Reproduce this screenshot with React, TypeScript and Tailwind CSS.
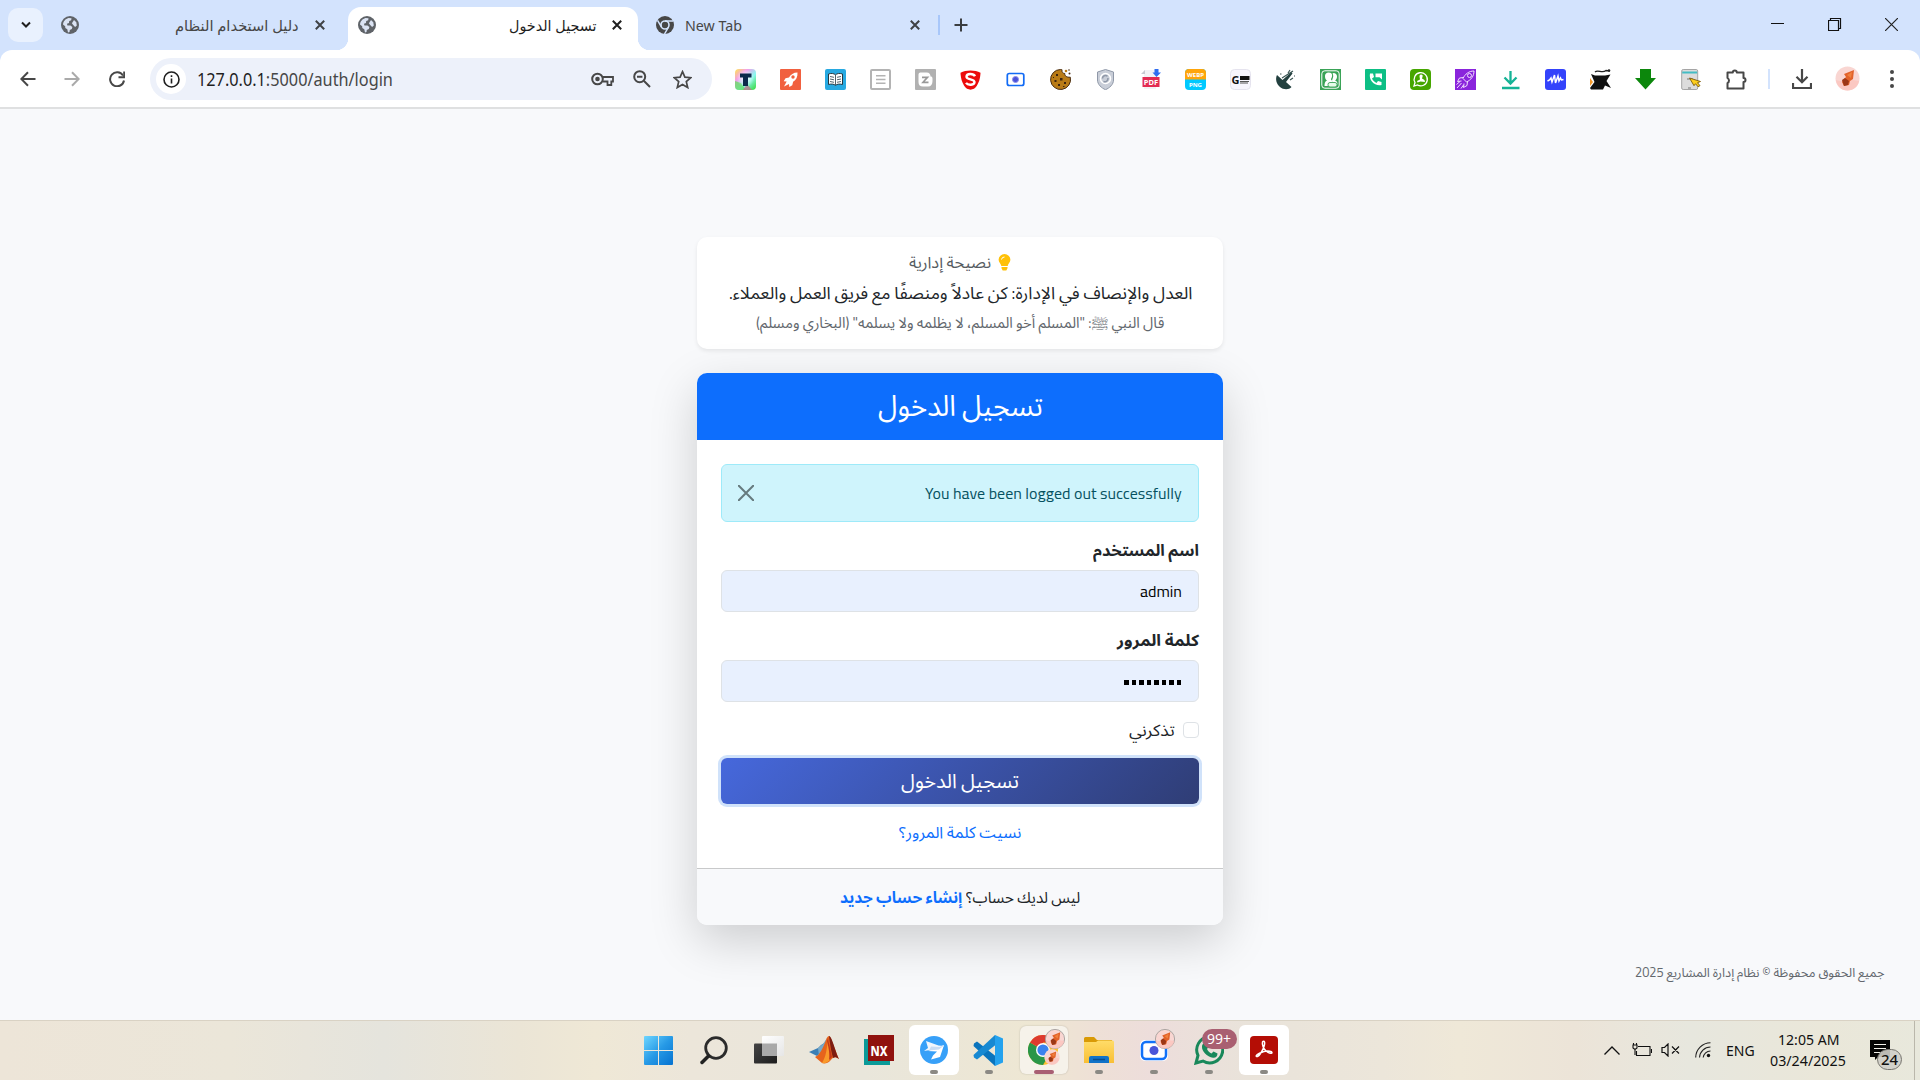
import React, { useLayoutEffect, useRef, useState, type ReactNode } from "react";

const UI = "font-['Noto_Sans','Open_Sans','DejaVu_Sans',sans-serif]";
const AR = "font-['Titillium_Web','Noto_Sans_Arabic','DejaVu_Sans',sans-serif]";

/* Keeps a single line of text at a fixed width, whatever font is available. */
function Fit({ w, className = "", rtl = false, children }: { w: number; className?: string; rtl?: boolean; children: ReactNode }) {
  const ref = useRef<HTMLSpanElement>(null);
  const [scale, setScale] = useState(1);
  useLayoutEffect(() => {
    if (ref.current) setScale(w / ref.current.offsetWidth);
  }, [w]);
  return (
    <span dir="ltr" className="block shrink-0 whitespace-nowrap text-left" style={{ width: w }}>
      <span ref={ref} dir={rtl ? "rtl" : "ltr"} className={`block w-max origin-left ${className}`} style={{ transform: `scaleX(${scale})` }}>
        {children}
      </span>
    </span>
  );
}

const Globe = () => (
  <svg className="size-[18px]" viewBox="0 0 18 18">
    <circle cx="9" cy="9" r="9" fill="#5f6368" />
    <path d="M2 8.600C2.200 5.500 4.500 2.800 7.500 2l3 .2-.3 2-2 .8-.2 2-2 .8.4 1.600h3l2 1.700-.6 2-2 .8-.3 2-1.500.5-.7-3.200-2-1.200-.1-1.700z" fill="#dbe3f3" />
    <path d="M13 4l2.300 2.200.5 3.300-1.700 1.600-1.900-2.100-1.300-1.800z" fill="#dbe3f3" />
  </svg>
);

const Close = ({ c = "#3f4245", w = 2 }: { c?: string; w?: number }) => (
  <svg className="size-[10px]" viewBox="0 0 10 10">
    <path d="M.8.8l8.400 8.400M9.200.8L.8 9.200" stroke={c} strokeWidth={w} />
  </svg>
);

const line = { fill: "none", stroke: "#474747", strokeWidth: 2 } as const;

const Avatar = ({ className = "size-[25px]", ring = false }: { className?: string; ring?: boolean }) => (
  <svg className={className} viewBox="0 0 25 25">
    <circle cx="12.500" cy="12.500" r="12" fill="#f9d6d2" stroke={ring ? "#a9a3a0" : "none"} strokeWidth="1.200" />
    <path d="M1 14c5 2 8 1 11-1l12 2c-1 6-6 9.500-11.500 9.500C6 24.500 2 20 1 14z" fill="#fbc4be" opacity=".8" />
    <path d="M9 8l10-4-1 9-3 2-1 4-5 1-2-4 2-3 2-2z" fill="#e2622a" />
    <path d="M7 14l3-2 4 3-1 4-4 1z" fill="#9c3717" />
    <path d="M12 9l5-3-1 6z" fill="#f0813f" />
  </svg>
);

const extensions: ReactNode[] = [
  <>
    <defs>
      <linearGradient id="rb" x1="0" y1="0" x2="1" y2="1"><stop offset="0" stopColor="#ffe94a" /><stop offset=".3" stopColor="#f49bea" /><stop offset=".6" stopColor="#8bf7f0" /><stop offset="1" stopColor="#35d934" /></linearGradient>
      <radialGradient id="rc"><stop offset="0" stopColor="#fff" /><stop offset="1" stopColor="#fff" stopOpacity="0" /></radialGradient>
    </defs>
    <rect width="21" height="21" rx="4" fill="url(#rb)" />
    <path d="M0 12l6 2 5 7H4a4 4 0 0 1-4-4z" fill="#5fdd55" opacity=".7" />
    <path d="M8 21l4-6 5 6z" fill="#c96a8a" opacity=".7" />
    <circle cx="10.500" cy="9" r="9" fill="url(#rc)" />
    <path d="M5 4.500h11.500v4h-3.500v8.500H8V8.500H5z" fill="#0d2a4a" />
  </>,
  <>
    <rect width="21" height="21" rx="1" fill="#f1603f" />
    <path d="M17.500 3.500c-4 0-7 2-8.500 5l-3.500.8-1.800 3 3 .2-2.700 5 5-2.500.3 3 3-1.800.8-3.500c3-1.700 4.700-4.700 4.400-9.200z" fill="#fff" />
    <circle cx="13" cy="8" r="1.700" fill="#f1603f" />
  </>,
  <>
    <rect width="21" height="21" rx="2" fill="#27a9e1" />
    <path d="M3.500 5c3-1 5.500-.5 7 .8 1.500-1.300 4-1.800 7-.8v10.500c-3-.8-5.500-.5-7 .9-1.500-1.400-4-1.700-7-.9z" fill="#fff" stroke="#273840" />
    <path d="M10.500 6v10M5 7.500l4 .8M5 10l4 .8M5 12.500l4 .8M16 7.500l-4 .8M16 10l-4 .8M16 12.500l-4 .8" stroke="#3d5059" strokeWidth=".9" />
  </>,
  <>
    <rect x="1" y="1" width="19" height="19" rx="1" fill="#fff" stroke="#b3b3b3" strokeWidth="2" />
    <path d="M6 6.800h9.500M6 10.500h9.500M6 14.200h9.500" stroke="#b3b3b3" strokeWidth="1.400" />
  </>,
  <>
    <rect width="21" height="21" rx="1" fill="#b1b1b1" />
    <path d="M5.500 3.500h6c3 0 4 1.800 4 4 2.300 0 2 2 2 4.500 0 3.500-1.500 5.500-4.500 5.500H8c-3 0-4.500-1.500-4.500-4.500V6c0-1.500.5-2.500 2-2.500z" fill="#fff" />
    <path d="M7 8.300h5.500L8 13.300h5.500" fill="none" stroke="#999" strokeWidth="1.700" />
  </>,
  <>
    <path d="M10.500 1.500c4 0 7 .8 10 2.200-.2 6.500-2.500 13-6.500 16l-3.500 1-3.500-1C3 16.700.7 10.200.5 3.700c3-1.400 6-2.200 10-2.200z" fill="#ec0b0b" />
    <path d="M15 7.200C13.500 4.300 6.500 4 6.500 7.700c0 3.300 8 2 8 5.400 0 3.200-6.500 3.600-8.500.8" fill="none" stroke="#fff" strokeWidth="2.400" />
  </>,
  <>
    <rect x="2.300" y="4.500" width="16.500" height="12" rx="2" fill="#fff" stroke="#126bf5" strokeWidth="1.700" />
    <circle cx="10.500" cy="10.500" r="3" fill="#4a51d8" stroke="#8c90ec" />
  </>,
  <>
    <path d="M10.500.5c1 0 1.500.2 1.500.2-.5 2.300.8 3.600 2.800 3.800-.3 2.300 1.700 4 5.500 3.700A10 10 0 1 1 10.500.5z" fill="#b97b16" stroke="#4a2d12" />
    <path d="M6 5h2v2H6zM10 9h2.500v2.500H10zM4.500 11h2v2h-2zM8 15h2v2H8zM14 13h2v2h-2zM3 8h1v1H3zM13 17h1.500v1H13z" fill="#3d240f" />
    <circle cx="16" cy="2" r="1.300" fill="#b97b16" /><circle cx="19.500" cy="4.500" r="1" fill="#4a2d12" /><circle cx="19" cy="1" r=".8" fill="#4a2d12" />
  </>,
  <>
    <path d="M10.500.5l8 2.500v8c0 4.500-4 8-8 9.700-4-1.700-8-5.200-8-9.700V3z" fill="#c9ced8" stroke="#8f98a8" />
    <circle cx="10.500" cy="9.500" r="5" fill="none" stroke="#fff" strokeWidth="1.500" />
    <path d="M7.500 9.500a3 3 0 0 1 5-2.200M8.500 12.500c3 1 4.500-1 4.500-3.500" fill="none" stroke="#8f98a8" strokeWidth="1.500" />
  </>,
  <>
    <path d="M4 1h12v19H4z" fill="#f2f2f5" /><path d="M1 5l4-4v4z" fill="#c7c9d1" />
    <rect x="2.500" y="8" width="17" height="10" fill="#e32b52" />
    <text x="11" y="16" fontSize="7.500" fontWeight="700" textAnchor="middle" fill="#fff" fontFamily="Noto Sans, sans-serif">PDF</text>
    <path d="M14.500 0h4v3.500H21L16.500 8l-4-4.500h2z" fill="#2f6df0" />
  </>,
  <>
    <rect width="21" height="21" rx="4" fill="#00c9ff" /><path d="M0 10.500V4a4 4 0 0 1 4-4h13a4 4 0 0 1 4 4v6.500z" fill="#ffa50a" />
    <text x="10.500" y="8" fontSize="6" fontWeight="700" textAnchor="middle" fill="#fff" fontFamily="Noto Sans, sans-serif">WEBP</text>
    <text x="10.500" y="17.500" fontSize="6" fontWeight="700" textAnchor="middle" fill="#fff" fontFamily="Noto Sans, sans-serif">PNG</text>
  </>,
  <>
    <rect x=".5" y=".5" width="20" height="20" rx="4" fill="#f7f5fd" stroke="#e5e3ee" />
    <text x="1.500" y="15" fontSize="11" fontWeight="700" fill="#111" fontFamily="Noto Sans, sans-serif">G</text>
    <path d="M10 7h9.500v4H10z" fill="#111" /><path d="M10 12.500h9M10 14h8" stroke="#555" />
  </>,
  <>
    <path d="M2 6c-2 4-.5 9 3 12s9 3 11.500 0L11 13l6.500-8.500-1-1.500-9 8z" fill="#23403f" />
    <path d="M7 9l11-7M15 11l3-2M13 4l2-3M19 7h1M5 5h1.500" stroke="#3c5755" strokeWidth="1.200" />
  </>,
  <>
    <rect width="21" height="21" fill="#3aa357" /><rect x="1.800" y="1.800" width="17.400" height="17.400" rx="3" fill="none" stroke="#fff" strokeWidth="1" />
    <path d="M8.500 3.500c3 0 4 1.500 3.500 4-.3 1.500-1 2-1 3l2 2.500v4H4.500c0-3 .5-4.500 2.500-5.500-1.500-1-2-2.500-2-4.500 0-2.200 1.500-3.500 3.500-3.500z" fill="#fff" />
    <path d="M13.500 4c2 0 3.500 1.500 3.500 3.500S16 11 15 11.500c2 .5 2.500 2 2.500 4h-4l-1.500-4 1-3c.5-1.500 0-3-.5-4z" fill="#fff" /><rect x="8" y="13.500" width="9" height="4.500" rx="2" fill="#e6fbe9" stroke="#3aa357" strokeWidth=".9" />
  </>,
  <>
    <rect width="21" height="21" rx="1" fill="#0dbf85" />
    <path d="M5 4.500h3l1 3.500-2 1.500c1 2.200 2.200 3.300 4.500 4.500l1.500-2 3.500 1v3C10 17.500 3.500 11.500 5 4.500z" fill="#fff" />
    <path d="M10.500 4.500H17v6l-2.500-2.200h-4z" fill="#fff" />
  </>,
  <>
    <rect width="21" height="21" rx="4" fill="#46a600" />
    <path d="M4 17l1-3.500a6.600 6.600 0 1 1 2.500 2.500z" fill="none" stroke="#fff" strokeWidth="1.300" />
    <path d="M11 5.500c1.500 0 2 1.200 1.500 2.300l-.5 1.700 2.500 1.500.5 2-4.500-.5-3 1-.5-1.500 3-1.500-.5-3c0-1.200.5-2 1.500-2z" fill="#fff" />
  </>,
  <>
    <rect width="21" height="21" fill="#8a24dc" />
    <path d="M19 2c-5 0-9 3-11 7.500l3.500 3.500C16 11 19 7 19 2zM8.500 8.500l-4 .5-2 3.500 4-.5M12.500 12.500l-.5 4-3.500 2 .5-4M6.500 14L2 19M5 12.500l-3.500 3M8.500 16L6 19.500" fill="none" stroke="#f1dcff" />
    <circle cx="14.500" cy="6.500" r="2" fill="none" stroke="#f1dcff" />
  </>,
  <path d="M10.500 2v11.500M4.500 8.500l6 6 6-6M2 19h17.500" fill="none" stroke="#15b396" strokeWidth="2.300" />,
  <>
    <rect width="21" height="21" rx="3" fill="#3443fb" />
    <path d="M2.500 12l2-1 1.500-2 1 4 2.500-7 1 8 2.500-7 1 5 1.500-3 1 2 2-.5" fill="none" stroke="#fff" strokeWidth="1.500" />
  </>,
  <>
    <path d="M0 9l3 4-3 4z" fill="#f69a2a" />
    <path d="M1 5l4 1.500h10l5.500-1-4 6.500L21 19l-6-2.500L13 20.500H1L0 19l4.500-6z" fill="#111" />
    <path d="M5 3c3-3 7 2 11-1.500l4 .5" fill="none" stroke="#222" strokeWidth="1.300" /><circle cx="19" cy="1.500" r="1.300" fill="#222" />
  </>,
  <path d="M5 0h11v9h5L10.500 20.500 0 9h5z" fill="#0c870c" />,
  <>
    <rect x=".7" y=".5" width="16" height="20" rx="1.500" fill="#dcdcdc" stroke="#a5a5a5" />
    <path d="M1.200 2.500h15v2h-15z" fill="#43bcc4" /><path d="M7 19h3M6 10h6" stroke="#777" />
    <path d="M8.500 9l11 3.500-3 1.200 2.500 3-2 1-2.500-3-1.500 2z" fill="#ffcf1c" stroke="#7c5a0a" strokeWidth=".9" />
  </>,
  <path d="M1.500 3.500h5.300a2 2 0 0 1 4 0h6.700v5.500a2 2 0 0 1 0 4v6.500h-16v-5.300a3 3 0 0 0 0-5.200z" {...line} strokeLinejoin="round" />,
];

function TabStrip() {
  return (
    <div className={`flex h-[50px] shrink-0 bg-[#d3e3fd] ${UI}`}>
      <div className="mt-2 ml-2 flex h-[34px] w-[35px] items-center justify-center rounded-[10px] bg-[#e9f1fe]">
        <svg className="size-[10px]" viewBox="0 0 10 10"><path d="M1 2.500l4 4 4-4" fill="none" stroke="#1f1f1f" strokeWidth="2" /></svg>
      </div>
      <div className="flex w-[305px] items-center pl-[18px]">
        <Globe />
        <span className="ml-24"><Fit w={124} rtl className={`text-[15px] leading-[26px] text-[#474747] ${UI}`}>دليل استخدام النظام</Fit></span>
        <span className="ml-4"><Close /></span>
      </div>
      <div className="relative mt-[7px] flex w-[290px] items-center rounded-t-[13px] bg-white pb-[7px] pl-2.5 before:absolute before:bottom-0 before:-left-3 before:size-3 before:bg-[radial-gradient(circle_at_0_0,transparent_12px,#fff_12.5px)] after:absolute after:-right-3 after:bottom-0 after:size-3 after:bg-[radial-gradient(circle_at_100%_0,transparent_12px,#fff_12.5px)]">
        <Globe />
        <span className="ml-[133px]"><Fit w={88} rtl className="text-[15px] leading-[26px] text-[#1f1f1f]">تسجيل الدخول</Fit></span>
        <span className="ml-[15px]"><Close c="#1f1f1f" /></span>
      </div>
      <div className="flex w-[300px] items-center pl-[18px]">
        <svg className="size-[18px]" viewBox="0 0 18 18">
          <circle cx="9" cy="9" r="9" fill="#474747" />
          <circle cx="9" cy="9" r="4" fill="none" stroke="#d3e3fd" strokeWidth="1.600" />
          <path d="M9 5h8M5.500 11L1.500 4.300M12.500 11l-4 7" stroke="#d3e3fd" strokeWidth="1.500" />
        </svg>
        <span className="ml-[11px]"><Fit w={57} className="text-[15px] leading-[26px] text-[#474747]">New Tab</Fit></span>
        <span className="ml-[168px]"><Close /></span>
      </div>
      <div className="mt-[15px] h-5 w-0.5 bg-[#a8c7fa]" />
      <svg className="mt-[18px] ml-[14px] size-[14px]" viewBox="0 0 14 14"><path d="M7 .5v13M.5 7h13" stroke="#3a3d40" strokeWidth="2" /></svg>
      <div className="ml-auto flex items-start gap-[43px] pt-[18px] pr-[22px]">
        <svg className="h-[13px] w-[14px]" viewBox="0 0 14 13"><path d="M0 5.500h13" stroke="#111" /></svg>
        <svg className="h-[13px] w-[14px]" viewBox="0 0 14 13"><path d="M.5 2.500h10v10H.5zM2.500 2.500v-2h10v10h-2" fill="none" stroke="#111" strokeWidth="1.200" /></svg>
        <svg className="h-[13px] w-[13px]" viewBox="0 0 13 13"><path d="M0 0l13 13M13 0L0 13" stroke="#222" strokeWidth="1.200" /></svg>
      </div>
    </div>
  );
}

function Toolbar() {
  return (
    <div className="h-[59px] shrink-0 bg-[#d3e3fd]">
      <div className="flex h-full items-center rounded-t-xl border-b-2 border-[#dfe0e1] bg-white">
        <svg className="ml-5 size-4" viewBox="0 0 16 16"><path d="M15.500 8H1.500M8 1.200L1.300 8 8 14.800" {...line} /></svg>
        <svg className="ml-7 size-4" viewBox="0 0 16 16"><path d="M.5 8h14M8 1.200L14.700 8 8 14.800" {...line} stroke="#aaaaaa" /></svg>
        <svg className="ml-[29px] size-4" viewBox="0 0 16 16"><path d="M14 4.500A7 7 0 1 0 15 9.500M15.200.5v5.700H9.500" {...line} /></svg>
        <div className="ml-[25px] mt-px flex h-[42px] w-[562px] items-center rounded-full bg-[#edf1fa] pl-1.5">
          <div className="flex size-[30px] items-center justify-center rounded-full bg-white">
            <svg className="size-[17px]" viewBox="0 0 17 17"><circle cx="8.500" cy="8.500" r="7.500" fill="none" stroke="#1f1f1f" strokeWidth="1.600" /><path d="M8.500 7.500v5M8.500 4.300v1.700" stroke="#1f1f1f" strokeWidth="1.600" /></svg>
          </div>
          <span className="ml-[11px]"><Fit w={196} className={`text-[18px] leading-7 text-[#1f1f1f] ${UI}`}>127.0.0.1<span className="text-[#474747]">:5000/auth/login</span></Fit></span>
          <svg className="ml-[198px] h-[14px] w-[23px]" viewBox="0 0 23 14"><circle cx="6.500" cy="7" r="5.300" {...line} /><circle cx="6.500" cy="7" r="2.300" fill="#474747" /><path d="M12 5h10v4.500h-1.700V13H16.500V9.500h-5" {...line} strokeWidth="1.800" /></svg>
          <svg className="ml-[19px] size-[18px]" viewBox="0 0 18 18"><circle cx="6.700" cy="6.700" r="5.500" {...line} /><path d="M4 6.700h5.400M10.800 10.800l6.200 6.200" {...line} /></svg>
          <svg className="ml-[22px] size-[19px]" viewBox="0 0 19 19"><path d="M9.500 1.700l2.400 5.500 5.900.5-4.500 3.900 1.400 5.900-5.200-3.100-5.200 3.100 1.400-5.900L1.200 7.700l5.900-.5z" {...line} strokeWidth="1.700" /></svg>
        </div>
        <div className="ml-[10.5px] mt-0.5 flex">
          {extensions.map((art, i) => (
            <div key={i} className="flex w-[45.05px] justify-center"><svg className="size-[21px]" viewBox="0 0 21 21">{art}</svg></div>
          ))}
        </div>
        <div className="ml-[9px] h-5 w-0.5 bg-[#d3e3fd]" />
        <svg className="ml-[22px] size-5" viewBox="0 0 20 20"><path d="M10 0v13M4.500 7.800L10 13.300l5.500-5.500M1 14v5h18v-5" {...line} strokeWidth="2.200" /></svg>
        <div className="ml-[23px]"><Avatar /></div>
        <svg className="ml-[30px] h-5 w-1" viewBox="0 0 4 20"><circle cx="2" cy="3" r="2" fill="#474747" /><circle cx="2" cy="10" r="2" fill="#474747" /><circle cx="2" cy="17" r="2" fill="#474747" /></svg>
      </div>
    </div>
  );
}

function LoginPage() {
  return (
    <div dir="rtl" className={`flex h-[911px] shrink-0 flex-col items-center bg-[#f8f9fb] pt-[128px] text-[#212529] ${AR}`}>
      <section className="flex h-[112px] w-[526px] flex-col items-center rounded-[10px] bg-white pt-3 shadow-[0_2px_4px_rgba(0,0,0,0.08)]">
        <div className="flex h-[27px] items-center gap-[7px]">
          <svg className="h-[17px] w-[13px]" viewBox="0 0 12 17"><path d="M6 0a5.900 5.900 0 0 0-5.900 5.800c0 2.900 2.500 3.800 2.700 6.200h6.400c.2-2.400 2.700-3.300 2.700-6.200A5.900 5.900 0 0 0 6 0zM3 13h6v1.300L7.800 16.500H4.200L3 14.300z" fill="#ffc107" /><path d="M3 5.500A3 3 0 0 1 6 3" fill="none" stroke="#fff" /></svg>
          <Fit w={82} rtl className="text-[16px] leading-[27px] text-[#565c62]">نصيحة إدارية</Fit>
        </div>
        <div className="mt-[3px] h-7"><Fit w={463} rtl className="text-[17px] leading-7">العدل والإنصاف في الإدارة: كن عادلاً ومنصفًا مع فريق العمل والعملاء.</Fit></div>
        <div className="mt-0.5 h-7"><Fit w={408} rtl className="text-[15px] leading-7 text-[#62676d]">قال النبي ﷺ: "المسلم أخو المسلم، لا يظلمه ولا يسلمه" (البخاري ومسلم)</Fit></div>
      </section>

      <section className="mt-6 flex h-[552px] w-[526px] flex-col overflow-hidden rounded-[10px] bg-white shadow-[0_16px_48px_rgba(0,0,0,0.175)]">
        <h1 className="flex h-[67px] items-center justify-center bg-[#0d6efd] pb-1 text-white"><Fit w={165} rtl className="text-[29px] leading-10">تسجيل الدخول</Fit></h1>
        <div className="flex flex-1 flex-col px-6 pt-6">
          <div className="flex h-[58px] items-center justify-between rounded-md border border-[#9eeaf9] bg-[#cff4fc] px-4 text-[#055160]">
            <Fit w={257} className="font-['Titillium_Web','Open_Sans',sans-serif] text-[16px] leading-6">You have been logged out successfully</Fit>
            <svg className="size-4" viewBox="0 0 16 16"><path d="M.8.8l14.400 14.400M15.200.8L.8 15.200" stroke="#667a7e" strokeWidth="2" strokeLinecap="round" /></svg>
          </div>
          <label className="mt-4 flex h-6"><Fit w={106} rtl className="text-[16px] leading-6 font-bold">اسم المستخدم</Fit></label>
          <div className="mt-2 flex h-[42px] items-center rounded-md border border-[#dee2e6] bg-[#e8f0fe] px-4 text-black">
            <Fit w={42} className="font-['Titillium_Web','Open_Sans',sans-serif] text-[16px] leading-6">admin</Fit>
          </div>
          <label className="mt-4 flex h-6"><Fit w={82} rtl className="text-[16px] leading-6 font-bold">كلمة المرور</Fit></label>
          <div className="mt-2 flex h-[42px] items-center gap-[3.1px] rounded-md border border-[#dee2e6] bg-[#e8f0fe] px-[17px] pt-[3px]">
            {Array.from({ length: 8 }, (_, i) => <span key={i} className="h-[5px] w-[4.4px] bg-black" />)}
          </div>
          <div className="mt-4 flex h-6 items-center gap-2">
            <span className="size-4 rounded border border-[#dee2e6] bg-white" />
            <Fit w={46} rtl className="text-[16px] leading-6">تذكرني</Fit>
          </div>
          <button className="mt-4 flex h-[46px] shrink-0 items-center justify-center rounded-md bg-[linear-gradient(135deg,#4668dc_0%,#2f3d75_100%)] text-white shadow-[0_0_0_3px_#d0e2fa]"><Fit w={118} rtl className="text-[20px] leading-8">تسجيل الدخول</Fit></button>
          <a className="mt-4 flex h-6 justify-center text-[#0d6efd]"><Fit w={122} rtl className="text-[16px] leading-6">نسيت كلمة المرور؟</Fit></a>
        </div>
        <div className="flex h-[57px] items-center justify-center gap-1 border-t border-[#c8c9ca] bg-[#f8f9fb]">
          <Fit w={114} rtl className="text-[16px] leading-6">ليس لديك حساب؟</Fit>
          <Fit w={122} rtl className="text-[16px] leading-6 font-bold text-[#0d6efd]">إنشاء حساب جديد</Fit>
        </div>
      </section>
      <footer className="mt-9 flex w-full pr-[35px]"><Fit w={250} rtl className="text-[12.5px] leading-6 text-[#62676d]">جميع الحقوق محفوظة © نظام إدارة المشاريع 2025</Fit></footer>
    </div>
  );
}

function TaskApp({ box = "size-[50px]", mark = "bottom-px w-2 bg-[#8b8984]", open = true, children }: { box?: string; mark?: string; open?: boolean; children: ReactNode }) {
  return (
    <div className="flex w-[55px] items-center justify-center">
      <div className={`relative flex items-center justify-center rounded-md ${box}`}>
        {children}
        {open && <span className={`absolute h-1 rounded-full ${mark}`} />}
      </div>
    </div>
  );
}

function Taskbar() {
  return (
    <div className={`flex h-[60px] shrink-0 items-center border-t border-[#d9d2c4] bg-[linear-gradient(90deg,#ede5d8_0%,#ebe6d9_12%,#e5e4dd_20%,#ebe5d6_27%,#efe8d6_31%,#ece6da_36%,#e9e6db_45%,#eee7d3_54%,#eee0d6_57%,#eddddb_60%,#e9e3da_65%,#ece6da_72%,#efe8d8_76%,#ece4d8_82%,#e7e7de_88%,#eae7d9_95%,#e8e8dc_100%)] pb-px text-[#111] ${UI}`}>
      <div className="ml-[631px] flex">
        <TaskApp open={false}>
          <svg className="size-[29px]" viewBox="0 0 29 29">
            <defs><linearGradient id="wn" x1="0" y1="0" x2="1" y2="1"><stop stopColor="#6fd6ff" /><stop offset=".5" stopColor="#279ae6" /><stop offset="1" stopColor="#0672d0" /></linearGradient></defs>
            <path d="M0 1a1 1 0 0 1 1-1h13v14H0zM15 0h13a1 1 0 0 1 1 1v13H15zM0 15h14v14H1a1 1 0 0 1-1-1zM15 15h14v13a1 1 0 0 1-1 1H15z" fill="url(#wn)" />
          </svg>
        </TaskApp>
        <TaskApp open={false}>
          <svg className="size-[29px]" viewBox="0 0 29 29"><circle cx="17" cy="12" r="10.300" fill="none" stroke="#2b2b2b" strokeWidth="2.800" /><path d="M9.500 20L3 26.500" stroke="#222" strokeWidth="3.500" strokeLinecap="round" /></svg>
        </TaskApp>
        <TaskApp open={false}>
          <svg className="size-[30px]" viewBox="0 0 30 30">
            <defs>
              <linearGradient id="tv" x1="0" y1="0" x2="1" y2="1"><stop stopColor="#444" /><stop offset="1" stopColor="#1d1d1d" /></linearGradient>
              <linearGradient id="tw" x1="0" y1="0" x2="1" y2="1"><stop stopColor="#fff" /><stop offset="1" stopColor="#e6e6e6" /></linearGradient>
            </defs>
            <rect y="8.500" width="23" height="20" rx="1" fill="url(#tv)" /><rect x="8" y="1" width="22" height="20" rx="1" fill="url(#tw)" /><path d="M8 8.500h15V21H8z" fill="#a9a9a9" />
          </svg>
        </TaskApp>
        <TaskApp open={false}>
          <svg className="size-[30px]" viewBox="0 0 30 30">
            <path d="M0 17l9-4 3-3 5-3-3 9-6 5z" fill="#3b7fb5" /><path d="M9 13l5-4 4-6-3 11-5 7z" fill="#78a9c8" />
            <path d="M6 22c5-2 8-9 11-17 1-3 2-4 3-4 2 0 6 14 10 23-4-3-6-2-9 2-2 2-5 3-8 2z" fill="#e6641c" />
            <path d="M20 1c3 0 6 15 10 23-3-2-4-2-6-1-2-7-3-14-4-22z" fill="#7e1d12" /><path d="M13 28c4-6 5-15 6-24 1 7 2 15 2 21-2 2-5 4-8 3z" fill="#f99a2a" /><path d="M18 6c2 8 3 14 2 19l3-3c-1-6-3-12-4-19z" fill="#c2371b" />
          </svg>
        </TaskApp>
        <TaskApp open={false}>
          <svg className="size-[30px]" viewBox="0 0 30 30"><path d="M0 4h26v26H0z" fill="#0a9a98" /><path d="M4 0h26v26H4z" fill="#90120e" /><text x="6.500" y="21" fontSize="14" fontWeight="800" textLength="17" lengthAdjust="spacingAndGlyphs" fill="#fff" fontFamily="Noto Sans, sans-serif">NX</text></svg>
        </TaskApp>
        <TaskApp box="size-[50px] bg-white">
          <svg className="size-[28px]" viewBox="0 0 28 28"><circle cx="14" cy="14" r="14" fill="#37a0f8" /><path d="M6 5l2 7-4 3 6-1 9-1 5-3-5.500-.5z" fill="#f1f6fd" /><path d="M8 15l16-6-4 12-9 2.500 2-4 4-4z" fill="#fff" /><path d="M11 10.500l8 .5 5-1.500-5 4-10 1z" fill="#c9dcf4" /></svg>
        </TaskApp>
        <TaskApp>
          <svg className="size-[31px]" viewBox="0 0 31 31"><path d="M1 8.500l3-2 21 16.500-3 8L.500 11z" fill="#0a74bd" /><path d="M.5 20L22 0l3 8L4 24.500l-3-2z" fill="#1789d2" /><path d="M22 0l8 3.500v24L22 31z" fill="#24a2ee" /></svg>
        </TaskApp>
        <TaskApp box="size-12 bg-[#f6f2ea] shadow-[0_0_2px_rgba(0,0,0,0.2)]" mark="bottom-0 w-5 bg-[#a85f73]">
          <svg className="mr-0.5 size-[30px]" viewBox="0 0 30 30">
            <circle cx="15" cy="15" r="15" fill="#fbc02d" /><path d="M2 7.500A15 15 0 0 0 15 30l6.500-11.200L15 15z" fill="#2a9648" /><path d="M2 7.500A15 15 0 0 1 28 7.500H15v7.500z" fill="#dd3a2e" />
            <circle cx="15" cy="15" r="7" fill="#fff" /><circle cx="15" cy="15" r="5.600" fill="#3b82ee" />
          </svg>
          <span className="absolute top-[3px] left-[25px]"><Avatar ring className="size-5" /></span>
          <span className="absolute top-[23px] left-6"><Avatar className="size-4" /></span>
        </TaskApp>
        <TaskApp>
          <svg className="size-[30px]" viewBox="0 0 30 30">
            <defs><linearGradient id="fd" x1="0" y1="0" x2="0" y2="1"><stop stopColor="#ffdc69" /><stop offset="1" stopColor="#f9bf35" /></linearGradient></defs>
            <path d="M0 3.500A1.500 1.500 0 0 1 1.500 2H10l3 3h15v6H0z" fill="#d99a06" /><path d="M0 7h12l2-1.500h14.500A1.500 1.500 0 0 1 30 7v21H0z" fill="url(#fd)" /><path d="M5 28v-5a2 2 0 0 1 2-2h16a2 2 0 0 1 2 2v5z" fill="#1273c8" /><path d="M9 24.500h12" stroke="#0a4c8c" strokeWidth="1.500" />
          </svg>
        </TaskApp>
        <TaskApp>
          <svg className="size-[30px]" viewBox="0 0 30 30"><rect x="1" y="5" width="28" height="21" rx="5" fill="#fff" /><rect x="3" y="7" width="24" height="17" rx="4" fill="#fff" stroke="#1271f8" strokeWidth="2.500" /><circle cx="15" cy="15.500" r="4.500" fill="#4a55d9" /></svg>
          <span className="absolute top-1 left-[26px]"><Avatar ring className="size-5" /></span>
        </TaskApp>
        <TaskApp>
          <svg className="size-[30px]" viewBox="0 0 30 30"><path d="M2 28l2-7.500A13 13 0 1 1 9 26z" fill="none" stroke="#19885a" strokeWidth="3" /><path d="M10 8l3 0 1.500 4-1.500 2c1 2 2.500 3.500 4.500 4.500l2-2 4 2c0 3-2 4.500-4.500 4.200C13 22 7.500 16 8 11.500c0-1.500.8-2.800 2-3.500z" fill="#19885a" /></svg>
          <span className="absolute top-1 left-[18px] flex h-5 w-[35px] items-center justify-center rounded-full bg-[#a95f71] text-[14px] leading-none text-white">99+</span>
        </TaskApp>
        <TaskApp box="size-[50px] bg-white">
          <svg className="size-[28px]" viewBox="0 0 28 28"><rect width="28" height="28" rx="4" fill="#b40d05" /><path d="M13 5.500c2-1 2 2 1 5s-4 9-6.500 10c-2 .5-2-1.500 2-3.300s9-2.700 12-1.400c1.500 1.500-1 2-3.500.5s-5-4.500-5.500-8c-.2-1.500 0-2.500.5-2.800z" fill="none" stroke="#fff" strokeWidth="1.500" /></svg>
        </TaskApp>
      </div>
      <div className="ml-auto flex h-[59px] items-center">
        <svg className="h-[9px] w-4" viewBox="0 0 16 9"><path d="M.5 8.500L8 1l7.500 7.500" fill="none" stroke="#111" strokeWidth="1.300" /></svg>
        <svg className="ml-3 h-[14px] w-5" viewBox="0 0 20 14"><path d="M6 3.500h12v9H4.500V8M19.500 6v4M1 2h4v3L3 6.500 1 5zM1.500 0v2M4.500 0v2M3 6.500V12" fill="none" stroke="#111" strokeWidth="1.100" /></svg>
        <svg className="ml-[9px] h-[14px] w-[19px]" viewBox="0 0 19 14"><path d="M1 4.500h2.500L7 1v12L3.500 9.500H1zM11 3.500l7 7M18 3.500l-7 7" fill="none" stroke="#111" strokeWidth="1.200" /></svg>
        <svg className="ml-[15px] h-4 w-4" viewBox="0 0 16 16"><path d="M.7 15.500A15 15 0 0 1 15.500.7M4.500 15.500A11 11 0 0 1 15.500 5M8.200 15.500a7.300 7.300 0 0 1 7.300-6.500" fill="none" stroke="#222" strokeWidth="1.100" /><circle cx="13.500" cy="13.500" r="1.700" fill="#111" /></svg>
        <span className="ml-[15px]"><Fit w={29} className="text-[15px] leading-5">ENG</Fit></span>
        <div className="ml-[15px] flex w-[76px] flex-col items-center"><Fit w={61} className="text-[15px] leading-[21px]">12:05 AM</Fit><Fit w={76} className="text-[15px] leading-[21px]">03/24/2025</Fit></div>
        <div className="relative ml-6 h-5 w-5">
          <svg className="size-5" viewBox="0 0 20 20"><path d="M0 0h20v17H8l-3 3v-3H0z" fill="#050505" /><path d="M4 4.500h12M4 8.500h12M4 12.500h8" stroke="#f0efe8" /></svg>
          <span className="absolute top-[9px] left-[7px] flex h-[21px] w-[25px] items-center justify-center rounded-full border border-[#77756f] bg-[#cfcec8]/90 text-[15px] font-medium">24</span>
        </div>
        <div className="ml-6 h-full w-1.5 border-l border-[#bab7ab]" />
      </div>
    </div>
  );
}

export default function App() {
  return (
    <main className="flex h-[1080px] w-[1920px] flex-col overflow-hidden">
      <TabStrip />
      <Toolbar />
      <LoginPage />
      <Taskbar />
    </main>
  );
}
